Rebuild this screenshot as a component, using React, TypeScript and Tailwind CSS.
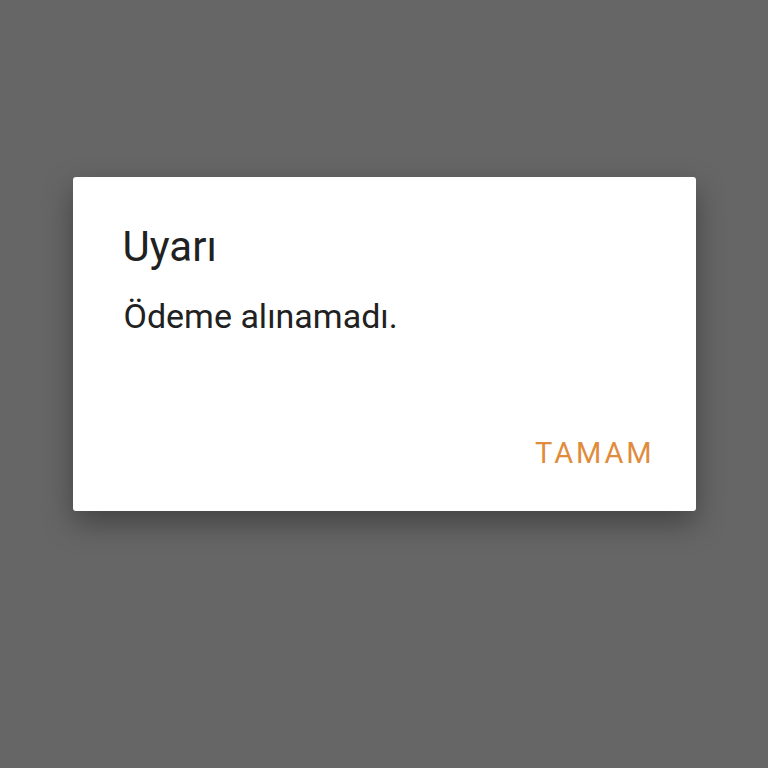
export default function App() {
  return (
    <main
      className="flex h-[768px] w-[768px] items-start justify-center bg-[#666666] pt-[177px]"
      style={{ fontFamily: "Roboto, 'Noto Sans', sans-serif" }}
    >
      <div className="flex h-[334px] w-[623px] flex-col rounded-[3px] bg-white shadow-[0_12px_30px_rgba(0,0,0,0.35)]">
        <h1 className="ml-[50px] mt-[45px] text-[42px] leading-[1.2] font-normal text-[#212121]">
          Uyarı
        </h1>
        <p className="ml-[51px] mt-[24px] text-[34px] leading-[1.2] text-[#212121]">
          Ödeme alınamadı.
        </p>
        <div className="mt-auto mb-[43px] flex justify-end pr-[41px]">
          <button
            type="button"
            className="text-[29px] leading-none font-normal tracking-[0.1em] text-[#e08c3c]"
          >
            TAMAM
          </button>
        </div>
      </div>
    </main>
  );
}
